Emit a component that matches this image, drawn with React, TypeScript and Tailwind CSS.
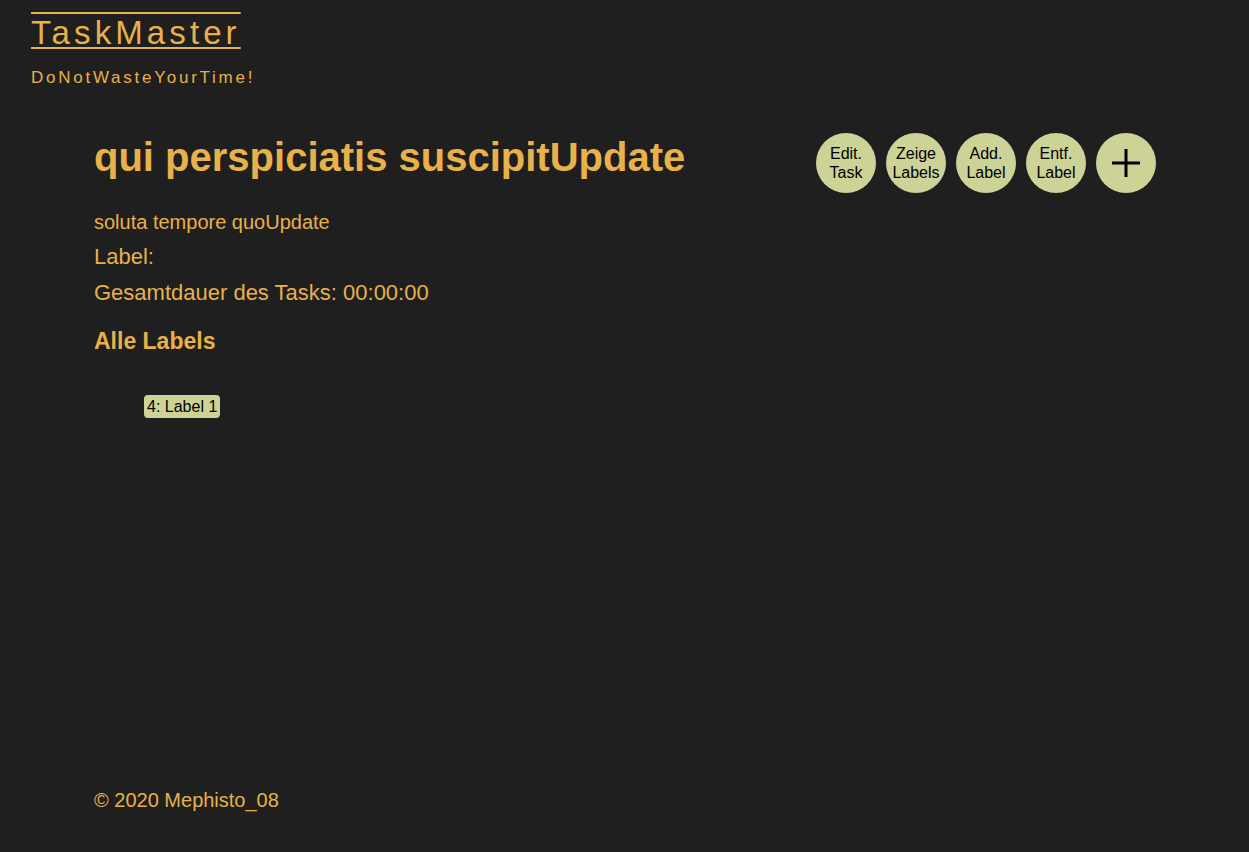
const buttons = [
  ["Edit.", "Task"],
  ["Zeige", "Labels"],
  ["Add.", "Label"],
  ["Entf.", "Label"],
];

export default function App() {
  return (
    <div className="min-h-[852px] bg-[#1f1f1f] font-[family-name:'Liberation_Sans',Arial,sans-serif] text-[#e8b14a] flex flex-col">
      <header className="px-[31px] pt-[13px]">
        <h1 className="text-[33px] leading-[40px] tracking-[4.1px] [text-decoration-line:underline_overline] decoration-2 underline-offset-[3px] inline-block">
          TaskMaster
        </h1>
        <p className="mt-[16px] text-[17px] leading-[18px] tracking-[2.75px]">DoNotWasteYourTime!</p>
      </header>

      <main className="flex-1 pl-[94px] pr-[93px] pt-[42px]">
        <div className="flex items-start justify-between">
          <h2 className="text-[40px] font-bold leading-[46px] mt-[5px]">qui perspiciatis suscipitUpdate</h2>
          <div className="flex gap-[10px] mt-[4px]">
            {buttons.map(([a, b]) => (
              <button
                key={a + b}
                className="w-[60px] h-[60px] rounded-full bg-[#cdd296] text-black text-[16px] leading-[19px] flex flex-col items-center justify-center whitespace-nowrap"
              >
                <span>{a}</span>
                <span>{b}</span>
              </button>
            ))}
            <button className="w-[60px] h-[60px] rounded-full bg-[#cdd296] text-black flex items-center justify-center">
              <svg width="30" height="30" viewBox="0 0 30 30" fill="none" stroke="currentColor" strokeWidth="3">
                <line x1="15" y1="1" x2="15" y2="29" />
                <line x1="1" y1="15" x2="29" y2="15" />
              </svg>
            </button>
          </div>
        </div>

        <p className="mt-[17px] text-[20px] leading-[24px]">soluta tempore quoUpdate</p>
        <p className="mt-[10px] text-[22px] leading-[26px]">Label:</p>
        <p className="mt-[10px] text-[22px] leading-[26px]">Gesamtdauer des Tasks: 00:00:00</p>
        <h3 className="mt-[21px] text-[23px] font-bold leading-[28px]">Alle Labels</h3>
        <ul className="mt-[40px] pl-[50px]">
          <li>
            <span className="inline-block rounded-[4px] bg-[#cdd296] px-[3px] text-[16px] leading-[23px] text-black">
              4: Label 1
            </span>
          </li>
        </ul>
      </main>

      <footer className="px-[94px] pb-[40px]">
        <p className="text-[20px] leading-[24px]">© 2020 Mephisto_08</p>
      </footer>
    </div>
  );
}
